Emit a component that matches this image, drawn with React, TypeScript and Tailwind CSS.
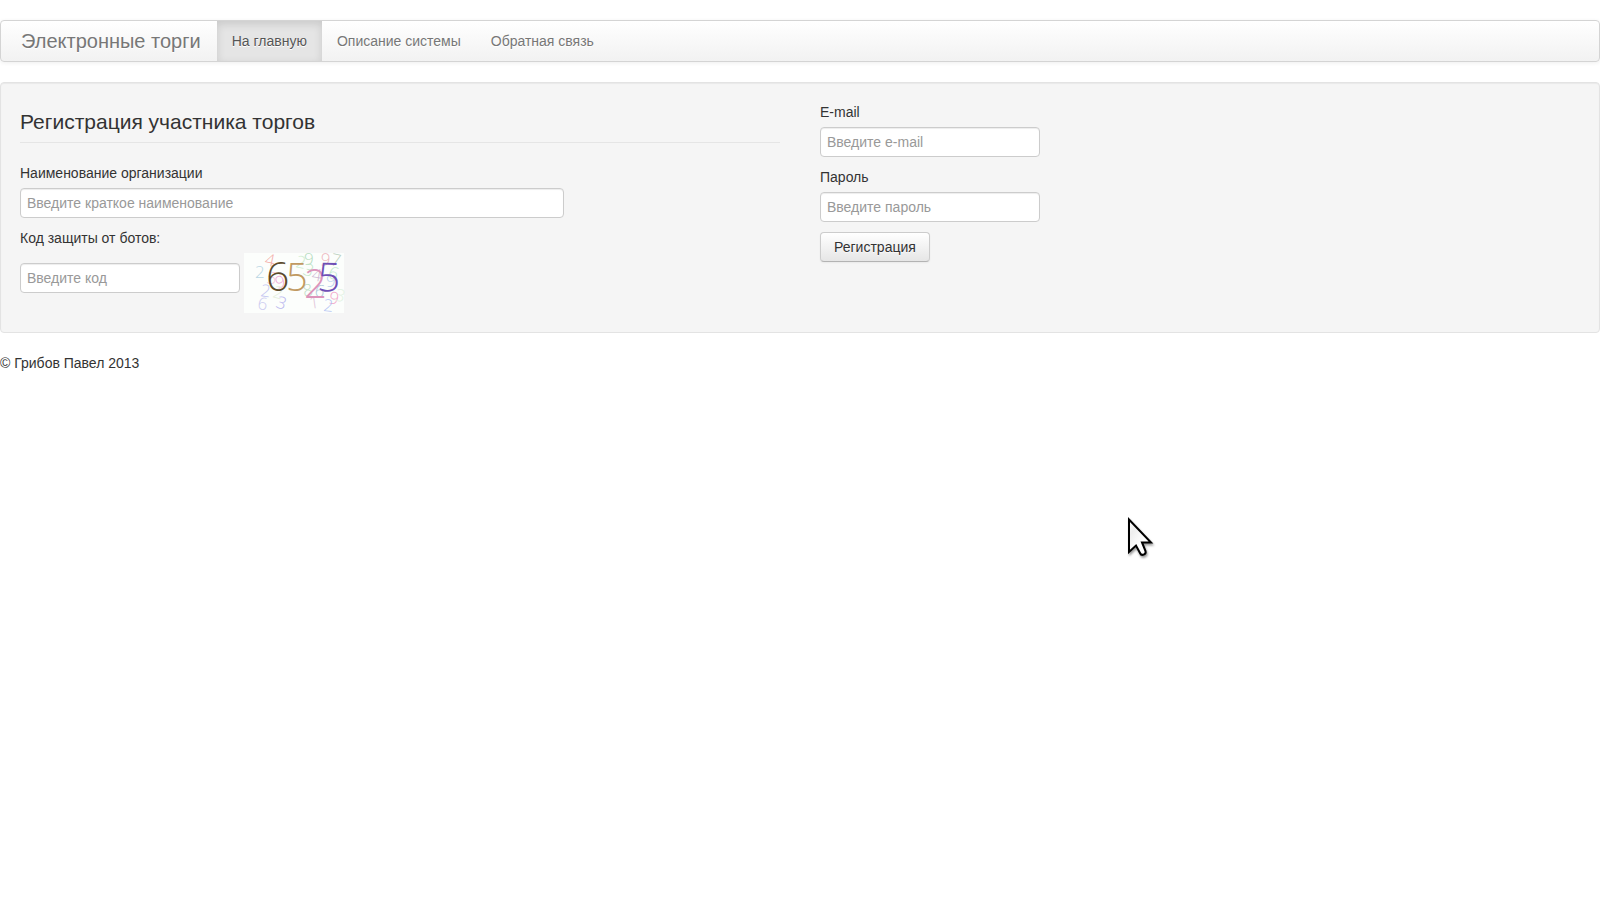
import type { InputHTMLAttributes } from 'react';

const NAV_ITEMS = [
  { label: 'На главную', href: '#home', active: true },
  { label: 'Описание системы', href: '#about', active: false },
  { label: 'Обратная связь', href: '#feedback', active: false },
];

const CAPTCHA_NOISE = [
  { char: '4', x: 20, y: 12, angle: 12, color: '#f3aaa5' },
  { char: '2', x: 11, y: 25, angle: 0, color: '#b9d6e4' },
  { char: '5', x: 22, y: 30, angle: 10, color: '#f2c4df' },
  { char: '9', x: 33, y: 36, angle: -15, color: '#f0a5d8' },
  { char: '2', x: 16, y: 43, angle: 8, color: '#c4c6f1' },
  { char: '2', x: 28, y: 44, angle: 15, color: '#e6efdc' },
  { char: '6', x: 13, y: 56, angle: 8, color: '#cccdf0' },
  { char: '3', x: 31, y: 54, angle: 18, color: '#b8b5ee' },
  { char: '2', x: 51, y: 14, angle: 12, color: '#d0edd2' },
  { char: '9', x: 60, y: 12, angle: 0, color: '#b5dcc0' },
  { char: '3', x: 58, y: 21, angle: 20, color: '#c4e6c9' },
  { char: '9', x: 76, y: 12, angle: 6, color: '#edb5bd' },
  { char: '7', x: 86, y: 12, angle: 12, color: '#b9cfbd' },
  { char: '4', x: 67, y: 27, angle: 10, color: '#cfb9d5' },
  { char: '6', x: 83, y: 24, angle: 20, color: '#c2ebce' },
  { char: '9', x: 82, y: 34, angle: 0, color: '#b9d2ee' },
  { char: '8', x: 60, y: 44, angle: -10, color: '#c0e0c6' },
  { char: '6', x: 70, y: 43, angle: 10, color: '#adc9da' },
  { char: '1', x: 66, y: 56, angle: -8, color: '#e0c4d8' },
  { char: '9', x: 84, y: 50, angle: 12, color: '#f3a5c9' },
  { char: '2', x: 79, y: 58, angle: 5, color: '#b5c5f3' },
  { char: '3', x: 90, y: 47, angle: 15, color: '#e3f2e3' },
];

const CAPTCHA_CODE = [
  { char: '6', x: 22, y: 38, size: 41, angle: 0, color: '#5d4b2b' },
  { char: '5', x: 42, y: 38, size: 38, angle: 0, color: '#c19a62' },
  { char: '2', x: 60, y: 45, size: 40, angle: 0, color: '#dc94bb' },
  { char: '5', x: 73, y: 38, size: 40, angle: 2, color: '#6f4fb5' },
];

function Navbar() {
  return (
    <header className="mt-5 mb-5 flex overflow-hidden rounded border border-[#d4d4d4] bg-linear-to-b from-white to-[#f2f2f2] shadow-[0_1px_4px_rgba(0,0,0,0.065)] [text-shadow:0_1px_0_#fff]">
      <a href="#home" className="py-[10px] pr-4 pl-5 text-[20px] leading-5 text-[#777]">
        Электронные торги
      </a>
      <nav aria-label="Главное меню">
        <ul className="flex">
          {NAV_ITEMS.map((item) => (
            <li key={item.label}>
              <a
                href={item.href}
                className={
                  item.active
                    ? 'block bg-[#e5e5e5] px-[15px] py-[10px] text-[#555] shadow-[inset_0_3px_8px_rgba(0,0,0,0.125)]'
                    : 'block px-[15px] py-[10px] text-[#777]'
                }
              >
                {item.label}
              </a>
            </li>
          ))}
        </ul>
      </nav>
    </header>
  );
}

function TextInput({ className, ...props }: InputHTMLAttributes<HTMLInputElement>) {
  return (
    <input
      className={`mb-[10px] block h-[30px] max-w-full rounded border border-[#ccc] bg-white px-[6px] py-1 text-[#555] shadow-[inset_0_1px_1px_rgba(0,0,0,0.075)] placeholder:text-[#999] ${className}`}
      {...props}
    />
  );
}

function Captcha() {
  return (
    <svg
      width="100"
      height="60"
      viewBox="0 0 100 60"
      role="img"
      aria-label="Код"
      className="overflow-visible bg-[#fcfefc] font-['Open_Sans',sans-serif] font-light"
    >
      {CAPTCHA_NOISE.map((d, i) => (
        <text key={i} x={d.x} y={d.y} fontSize="17" fill={d.color} transform={`rotate(${d.angle} ${d.x} ${d.y})`}>
          {d.char}
        </text>
      ))}
      {CAPTCHA_CODE.map((d, i) => (
        <text
          key={i}
          x={d.x}
          y={d.y}
          fontSize={d.size}
          fill={d.color}
          transform={`rotate(${d.angle} ${d.x} ${d.y})`}
        >
          {d.char}
        </text>
      ))}
    </svg>
  );
}

function RegistrationForm() {
  return (
    <form className="mb-5 grid grid-cols-2 gap-10 rounded border border-[#e3e3e3] bg-[#f5f5f5] p-[19px] shadow-[inset_0_1px_1px_rgba(0,0,0,0.05)]">
      <div>
        <h1 className="mb-5 border-b border-[#e5e5e5] text-[21px] leading-10">Регистрация участника торгов</h1>
        <label htmlFor="orgname" className="mb-[5px] block">Наименование организации</label>
        <TextInput id="orgname" type="text" placeholder="Введите краткое наименование" className="w-[544px]" />
        <label htmlFor="code" className="mb-[5px] block">Код защиты от ботов:</label>
        <div className="flex items-center gap-1">
          <TextInput id="code" type="text" placeholder="Введите код" className="w-[220px]" />
          <Captcha />
        </div>
      </div>
      <div>
        <label htmlFor="email" className="mb-[5px] block">E-mail</label>
        <TextInput id="email" type="email" placeholder="Введите e-mail" className="w-[220px]" />
        <label htmlFor="password" className="mb-[5px] block">Пароль</label>
        <TextInput id="password" type="password" placeholder="Введите пароль" className="w-[220px]" />
        <button
          type="submit"
          className="rounded border border-[#ccc] border-b-[#b3b3b3] bg-linear-to-b from-white to-[#e6e6e6] px-[13px] py-1 shadow-[inset_0_1px_0_rgba(255,255,255,0.2),0_1px_2px_rgba(0,0,0,0.05)] [text-shadow:0_1px_1px_rgba(255,255,255,0.75)]"
        >
          Регистрация
        </button>
      </div>
    </form>
  );
}

function Cursor() {
  return (
    <svg width="32" height="44" viewBox="0 0 32 44" aria-hidden="true" className="pointer-events-none absolute top-[516px] left-[1126px]">
      <defs>
        <linearGradient id="cursor-fill" x1="0" y1="0" x2="1" y2="1">
          <stop offset="0" stopColor="#fff" />
          <stop offset="0.25" stopColor="#eee" />
          <stop offset="0.6" stopColor="#fff" />
        </linearGradient>
      </defs>
      <path
        d="M3 3.500V36L10 29.500L14 37C15.500 40.500 20.500 38.500 19.500 35L16 26.500H25Z"
        fill="url(#cursor-fill)"
        stroke="#000"
        strokeWidth="2"
        className="drop-shadow-[1px_2px_1px_rgba(0,0,0,0.4)]"
      />
    </svg>
  );
}

export default function App() {
  return (
    <div className="relative flow-root min-h-screen bg-white font-['Liberation_Sans',Arial,sans-serif] text-[14px] leading-5 text-[#333]">
      <Navbar />
      <main>
        <RegistrationForm />
      </main>
      <footer>© Грибов Павел 2013</footer>
      <Cursor />
    </div>
  );
}
